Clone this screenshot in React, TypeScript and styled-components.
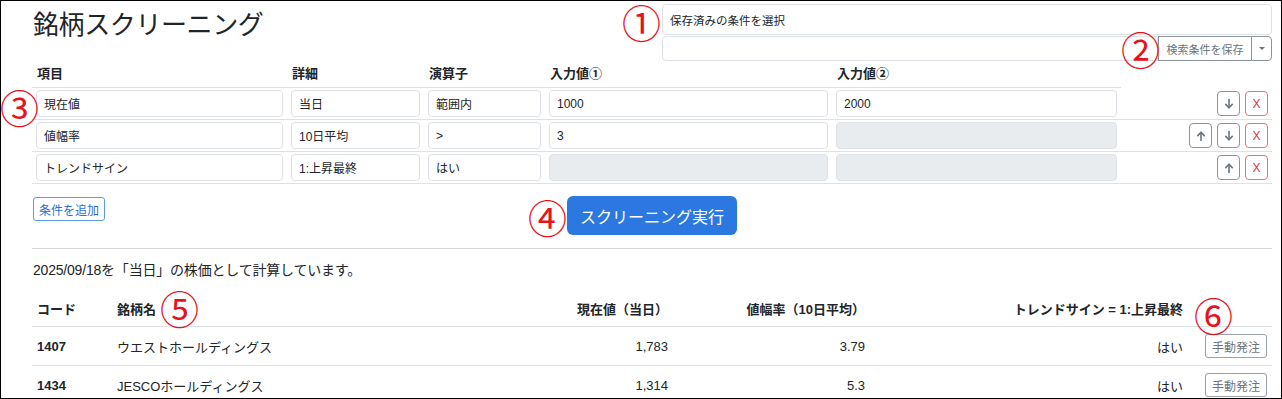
import styled, { createGlobalStyle } from "styled-components";

const GlobalStyle = createGlobalStyle`
  * {
    box-sizing: border-box;
  }
  body {
    margin: 0;
    background: #fff;
    color: #212529;
    font-family: "Liberation Sans", "Noto Sans CJK JP", sans-serif;
  }
`;

type Condition = {
  item: string;
  detail: string;
  op: string;
  v1: string | null;
  v2: string | null;
  up: boolean;
  down: boolean;
};

const conditions: Condition[] = [
  { item: "現在値", detail: "当日", op: "範囲内", v1: "1000", v2: "2000", up: false, down: true },
  { item: "値幅率", detail: "10日平均", op: ">", v1: "3", v2: null, up: true, down: true },
  { item: "トレンドサイン", detail: "1:上昇最終", op: "はい", v1: null, v2: null, up: true, down: false },
];

const results = [
  { code: "1407", name: "ウエストホールディングス", price: "1,783", range: "3.79", trend: "はい" },
  { code: "1434", name: "JESCOホールディングス", price: "1,314", range: "5.3", trend: "はい" },
];

const Arrow = ({ dir }: { dir: "up" | "down" }) => (
  <svg width="12" height="12" viewBox="0 0 12 12" fill="none">
    <g transform={dir === "down" ? "rotate(180 6 6)" : undefined}>
      <path d="M6 10.5V2.5" stroke="currentColor" strokeWidth="1.6" strokeLinecap="round" />
      <path d="M2.8 5.6L6 2.2L9.2 5.6" stroke="currentColor" strokeWidth="1.6" strokeLinecap="round" strokeLinejoin="round" />
    </g>
  </svg>
);

const App = () => {
  return (
    <Frame>
      <GlobalStyle />
      <Page>
        <Header>
          <Title>銘柄スクリーニング</Title>
          <SavedBox>
            <SavedSelect>保存済みの条件を選択</SavedSelect>
            <InputGroup>
              <NameInput />
              <SaveButton>検索条件を保存</SaveButton>
              <ToggleButton>
                <Caret />
              </ToggleButton>
            </InputGroup>
          </SavedBox>
        </Header>

        <CondTable>
          <colgroup>
            <col style={{ width: 255 }} />
            <col style={{ width: 137 }} />
            <col style={{ width: 121 }} />
            <col style={{ width: 287 }} />
            <col style={{ width: 289 }} />
            <col />
          </colgroup>
          <thead>
            <tr>
              <CondHead>項目</CondHead>
              <CondHead>詳細</CondHead>
              <CondHead>演算子</CondHead>
              <CondHead>入力値①</CondHead>
              <CondHead>入力値②</CondHead>
              <CondHead $noLine />
            </tr>
          </thead>
          <tbody>
            {conditions.map((c) => (
              <tr key={c.item}>
                <CondCell>
                  <Field>{c.item}</Field>
                </CondCell>
                <CondCell>
                  <Field>{c.detail}</Field>
                </CondCell>
                <CondCell>
                  <Field>{c.op}</Field>
                </CondCell>
                <CondCell>
                  <Field $disabled={c.v1 === null}>{c.v1}</Field>
                </CondCell>
                <CondCell>
                  <Field $disabled={c.v2 === null}>{c.v2}</Field>
                </CondCell>
                <CondCell>
                  <Actions>
                    {c.up && (
                      <IconButton>
                        <Arrow dir="up" />
                      </IconButton>
                    )}
                    {c.down && (
                      <IconButton>
                        <Arrow dir="down" />
                      </IconButton>
                    )}
                    <IconButton $danger>X</IconButton>
                  </Actions>
                </CondCell>
              </tr>
            ))}
          </tbody>
        </CondTable>

        <ButtonRow>
          <AddButton>条件を追加</AddButton>
          <RunButton>スクリーニング実行</RunButton>
        </ButtonRow>

        <Divider />

        <Note>2025/09/18を「当日」の株価として計算しています。</Note>

        <ResultTable>
          <colgroup>
            <col style={{ width: 80 }} />
            <col style={{ width: 358 }} />
            <col style={{ width: 203 }} />
            <col style={{ width: 197 }} />
            <col style={{ width: 318 }} />
            <col />
          </colgroup>
          <thead>
            <tr>
              <ResultHead>コード</ResultHead>
              <ResultHead>銘柄名</ResultHead>
              <ResultHead $right>現在値（当日）</ResultHead>
              <ResultHead $right>値幅率（10日平均）</ResultHead>
              <ResultHead $right>トレンドサイン = 1:上昇最終</ResultHead>
              <ResultHead />
            </tr>
          </thead>
          <tbody>
            {results.map((r) => (
              <tr key={r.code}>
                <ResultCell $bold>{r.code}</ResultCell>
                <ResultCell>{r.name}</ResultCell>
                <ResultCell $right>{r.price}</ResultCell>
                <ResultCell $right>{r.range}</ResultCell>
                <ResultCell $right>{r.trend}</ResultCell>
                <ResultCell $right>
                  <OrderButton>手動発注</OrderButton>
                </ResultCell>
              </tr>
            ))}
          </tbody>
        </ResultTable>
      </Page>

      <Marker $x={621} $y={1}>①</Marker>
      <Marker $x={1120} $y={28}>②</Marker>
      <Marker $x={-1} $y={86}>③</Marker>
      <Marker $x={527} $y={196}>④</Marker>
      <Marker $x={159} $y={287}>⑤</Marker>
      <Marker $x={1193} $y={294}>⑥</Marker>
    </Frame>
  );
};

const Frame = styled.div`
  position: relative;
  width: 1282px;
  height: 399px;
  border: 1px solid #000;
  overflow: hidden;
`;

const Page = styled.div`
  padding: 0 9px 0 31px;
`;

const Header = styled.div`
  display: flex;
  justify-content: space-between;
  padding-top: 3px;
`;

const Title = styled.h1`
  margin: 6px 0 0 1px;
  font-size: 26px;
  line-height: 30px;
  font-weight: 400;
  letter-spacing: -0.4px;
`;

const SavedBox = styled.div`
  width: 610px;
  display: flex;
  flex-direction: column;
  gap: 1px;
`;

const SavedSelect = styled.div`
  height: 31px;
  display: flex;
  align-items: center;
  padding: 0 7px;
  border: 1px solid #dee2e6;
  border-radius: 4px;
  font-size: 11.5px;
`;

const InputGroup = styled.div`
  display: flex;
  height: 25px;
`;

const NameInput = styled.div`
  flex: 1;
  border: 1px solid #dee2e6;
  border-radius: 4px 0 0 4px;
`;

const SaveButton = styled.button`
  width: 93px;
  padding: 0;
  border: 1px solid #8c939a;
  border-right: none;
  background: #fff;
  color: #6c757d;
  font-family: inherit;
  font-size: 11px;
`;

const ToggleButton = styled.button`
  width: 21px;
  display: flex;
  align-items: center;
  justify-content: center;
  padding: 0;
  border: 1px solid #8c939a;
  border-radius: 0 4px 4px 0;
  background: #fff;
`;

const Caret = styled.span`
  width: 0;
  height: 0;
  border-left: 3px solid transparent;
  border-right: 3px solid transparent;
  border-top: 3px solid #6c757d;
`;

const CondTable = styled.table`
  width: 100%;
  border-collapse: collapse;
  table-layout: fixed;
`;

const CondHead = styled.th<{ $noLine?: boolean }>`
  padding: 5px 5px 5px;
  text-align: left;
  font-size: 13px;
  line-height: 16px;
  font-weight: 700;
  border-bottom: 1px solid ${(p) => (p.$noLine ? "transparent" : "#dee2e6")};
`;

const CondCell = styled.td`
  padding: 2px 4px;
  border-bottom: 1px solid #dee2e6;
`;

const Field = styled.div<{ $disabled?: boolean }>`
  height: 27px;
  display: flex;
  align-items: center;
  padding: 0 7px;
  border: 1px solid #dee2e6;
  border-radius: 4px;
  background: ${(p) => (p.$disabled ? "#e9ecef" : "#fff")};
  font-size: 12px;
`;

const Actions = styled.div`
  display: flex;
  justify-content: flex-end;
  gap: 5px;
`;

const IconButton = styled.button<{ $danger?: boolean }>`
  width: 23px;
  height: 25px;
  display: flex;
  align-items: center;
  justify-content: center;
  padding: 0;
  border: 1px solid ${(p) => (p.$danger ? "#e4737e" : "#8c939a")};
  border-radius: 4px;
  background: #fff;
  color: ${(p) => (p.$danger ? "#dc3545" : "#6c757d")};
  font-family: inherit;
  font-size: 12px;
`;

const ButtonRow = styled.div`
  display: grid;
  grid-template-columns: 1fr auto 1fr;
  align-items: start;
  margin-top: 12px;
`;

const AddButton = styled.button`
  justify-self: start;
  height: 24px;
  margin-top: 1px;
  margin-left: 1px;
  padding: 0 5px;
  border: 1px solid #5d9be9;
  border-radius: 3px;
  background: #fff;
  color: #2a6fd4;
  font-family: inherit;
  font-size: 12px;
`;

const RunButton = styled.button`
  height: 39px;
  padding: 0 13px;
  border: none;
  border-radius: 6px;
  background: #2b79e0;
  color: #fff;
  font-family: inherit;
  font-size: 16px;
`;

const Divider = styled.hr`
  margin: 13px 0 0;
  border: none;
  border-top: 1px solid #d3d6da;
`;

const Note = styled.p`
  margin: 11px 0 0 1px;
  font-size: 14px;
  line-height: 20px;
  letter-spacing: -0.2px;
`;

const ResultTable = styled.table`
  width: 100%;
  margin-top: 14px;
  border-collapse: collapse;
  table-layout: fixed;
`;

const ResultHead = styled.th<{ $right?: boolean }>`
  padding: 8px 5px;
  text-align: ${(p) => (p.$right ? "right" : "left")};
  font-size: 13px;
  line-height: 16px;
  font-weight: 700;
  white-space: nowrap;
  border-bottom: 1px solid #dee2e6;
`;

const ResultCell = styled.td<{ $right?: boolean; $bold?: boolean }>`
  height: 39px;
  padding: 0 5px;
  text-align: ${(p) => (p.$right ? "right" : "left")};
  font-size: 13px;
  font-weight: ${(p) => (p.$bold ? 700 : 400)};
  border-bottom: 1px solid #dee2e6;
`;

const OrderButton = styled.button`
  height: 24px;
  padding: 0 6px;
  border: 1px solid #9aa1a7;
  border-radius: 3px;
  background: #fff;
  color: #6c757d;
  font-family: inherit;
  font-size: 12px;
`;

const Marker = styled.span<{ $x: number; $y: number }>`
  position: absolute;
  left: ${(p) => p.$x}px;
  top: ${(p) => p.$y}px;
  font-family: "Noto Sans CJK JP", sans-serif;
  font-size: 39px;
  line-height: 1;
  color: #e8121c;
`;

export default App;
